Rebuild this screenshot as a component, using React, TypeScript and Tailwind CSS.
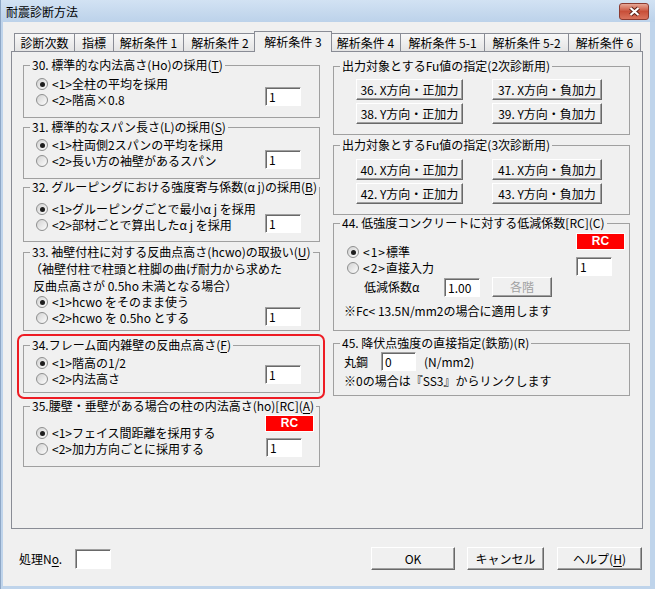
import React from "react";

type Kids = { children?: React.ReactNode };

const tabs = [
  { label: "診断次数", w: "w-[60px]" },
  { label: "指標", w: "w-[39px]" },
  { label: "解析条件 1", w: "w-[70px]" },
  { label: "解析条件 2", w: "w-[73px]" },
  { label: "解析条件 3", w: "w-[78px]", active: true },
  { label: "解析条件 4", w: "w-[70px]" },
  { label: "解析条件 5-1", w: "w-[84px]" },
  { label: "解析条件 5-2", w: "w-[84px]" },
  { label: "解析条件 6", w: "w-[73px]", last: true },
];

const U = ({ children }: Kids) => <span className="underline underline-offset-2">{children}</span>;

function Group({ title, className = "", children }: { title: React.ReactNode; className?: string } & Kids) {
  return (
    <fieldset className={`border border-[#a0a0a0] min-w-0 ${className}`}>
      <legend className="ml-[6px] px-[2px] h-[14px] leading-[14px] whitespace-nowrap">{title}</legend>
      {children}
    </fieldset>
  );
}

function Radio({ on, children }: { on?: boolean } & Kids) {
  return (
    <div className="flex items-center h-[16px] whitespace-nowrap">
      <span className="flex items-center justify-center w-[12px] h-[12px] shrink-0 rounded-full border border-[#8e8f8f] bg-linear-to-br from-[#d2d2d2] to-[#fdfdfd]">
        {on && <span className="w-[5px] h-[5px] rounded-full bg-[#1e1e1e]" />}
      </span>
      <span className="ml-[4px] leading-[16px]">{children}</span>
    </div>
  );
}

function Field({ v, className = "" }: { v?: string; className?: string }) {
  return (
    <div
      className={`h-[19px] shrink-0 bg-white border border-t-[#a0a0a0] border-l-[#a0a0a0] border-r-white border-b-white shadow-[inset_1px_1px_0_#696969] pl-[3px] leading-[17px] ${className}`}
    >
      {v}
    </div>
  );
}

function Btn({ className = "", disabled, children }: { className?: string; disabled?: boolean } & Kids) {
  return (
    <button
      type="button"
      className={`flex items-center justify-center shrink-0 bg-[#f0f0f0] border border-t-white border-l-white border-r-[#696969] border-b-[#696969] shadow-[inset_-1px_-1px_0_#a0a0a0] leading-[14px] whitespace-nowrap ${
        disabled ? "text-[#a0a0a0]" : "text-black"
      } ${className}`}
    >
      {children}
    </button>
  );
}

const Badge = ({ className = "" }: { className?: string }) => (
  <div
    className={`w-[47px] h-[15px] bg-[#ff0000] text-white font-bold text-[12px] leading-[15px] text-center font-['Liberation_Sans',sans-serif] shadow-[0_0_0_1px_#ffffff] ${className}`}
  >
    RC
  </div>
);

export default function App() {
  return (
    <div className="w-[655px] h-[589px] flex flex-col bg-[#bfd4eb] border-l border-[#8ea7c6] text-black text-[12px] font-['Noto_Sans_CJK_JP','Noto_Sans',sans-serif]">
      {/* title bar */}
      <div className="h-[22px] shrink-0 flex items-center pl-[5px] pr-[6px] bg-linear-to-b from-[#d2e2f3] to-[#bcd2ea]">
        <span className="leading-[14px] mt-[1px]">耐震診断方法</span>
        <div className="ml-auto w-[30px] h-[17px] mt-[1px] rounded-[3px] border border-[#8c3b31] bg-linear-to-b from-[#e6a797] via-[#c84f39] to-[#d9735d] flex items-center justify-center">
          <svg width="13" height="11" viewBox="0 0 13 11">
            <path d="M2.5 2 L10.5 9 M10.5 2 L2.5 9" stroke="#5b1f17" strokeWidth="4.2" />
            <path d="M2.5 2 L10.5 9 M10.5 2 L2.5 9" stroke="#ffffff" strokeWidth="2.2" />
          </svg>
        </div>
      </div>

      {/* client */}
      <div className="flex-1 ml-[2px] mr-[5px] mb-[3px] bg-[#f0f0f0] flex flex-col">
        {/* tab strip */}
        <div className="flex items-end h-[21px] mt-[9px] ml-[11px]">
          {tabs.map((t) =>
            t.active ? (
              <div
                key={t.label}
                className={`${t.w} -mx-[2px] h-[21px] relative z-10 bg-[#f0f0f0] border border-b-0 border-[#898c95] flex items-center justify-center pb-[1px] whitespace-nowrap`}
              >
                {t.label}
              </div>
            ) : (
              <div
                key={t.label}
                className={`${t.w} h-[18px] mb-[1px] bg-linear-to-b from-[#f8f8f8] to-[#e4e4e4] border-t border-l ${
                  t.last ? "border-r" : ""
                } border-[#898c95] flex items-center justify-center whitespace-nowrap`}
              >
                {t.label}
              </div>
            )
          )}
        </div>

        {/* tab panel */}
        <div className="-mt-[1px] ml-[8px] w-[632px] h-[478px] border border-[#898c95] flex pl-[11px] pr-[12px]">
          {/* left column */}
          <div className="w-[297px] flex flex-col pt-[6px]">
            <Group className="h-[60px]" title={<>30. 標準的な内法高さ(Ho)の採用(<U>T</U>)</>}>
              <div className="flex">
                <div className="pl-[12px] pt-[4px]">
                  <Radio on>&lt;1&gt;全柱の平均を採用</Radio>
                  <Radio>&lt;2&gt;階高×0.8</Radio>
                </div>
                <Field v="1" className="ml-auto mr-[18px] mt-[15px] w-[36px]" />
              </div>
            </Group>

            <Group className="h-[59px] mt-[2px]" title={<>31. 標準的なスパン長さ(L)の採用(<U>S</U>)</>}>
              <div className="flex">
                <div className="pl-[12px] pt-[3px]">
                  <Radio on>&lt;1&gt;柱両側2スパンの平均を採用</Radio>
                  <Radio>&lt;2&gt;長い方の袖壁があるスパン</Radio>
                </div>
                <Field v="1" className="ml-auto mr-[18px] mt-[16px] w-[36px]" />
              </div>
            </Group>

            <Group className="h-[62px] mt-[1px]" title={<>32. グルーピングにおける強度寄与係数(α j)の採用(<U>B</U>)</>}>
              <div className="flex">
                <div className="pl-[12px] pt-[7px]">
                  <Radio on>&lt;1&gt;グルーピングごとで最小α j を採用</Radio>
                  <Radio>&lt;2&gt;部材ごとで算出したα j を採用</Radio>
                </div>
                <Field v="1" className="ml-auto mr-[18px] mt-[20px] w-[36px]" />
              </div>
            </Group>

            <Group className="h-[86px] mt-[3px]" title={<>33. 袖壁付柱に対する反曲点高さ(hcwo)の取扱い(<U>U</U>)</>}>
              <div className="pl-[6px] pt-[1px] leading-[17px]">
                <div className="h-[17px]">（袖壁付柱で柱頭と柱脚の曲げ耐力から求めた</div>
                <div className="h-[17px] pl-[3px]">反曲点高さが 0.5ho 未満となる場合）</div>
              </div>
              <div className="flex">
                <div className="pl-[12px]">
                  <Radio on>&lt;1&gt;hcwo をそのまま使う</Radio>
                  <Radio>&lt;2&gt;hcwo を 0.5ho とする</Radio>
                </div>
                <Field v="1" className="ml-auto mr-[18px] mt-[13px] w-[36px]" />
              </div>
            </Group>

            {/* highlighted group */}
            <div className="mt-[3px] -ml-[6px] -mr-[5px] pl-[4px] pr-[3px] pt-[2px] pb-[4px] border-2 border-[#ee1c24] rounded-[7px]">
              <Group className="h-[55px]" title={<>34.フレーム面内雑壁の反曲点高さ(<U>F</U>)</>}>
                <div className="flex">
                  <div className="pl-[12px] pt-[3px]">
                    <Radio on>&lt;1&gt;階高の1/2</Radio>
                    <Radio>&lt;2&gt;内法高さ</Radio>
                  </div>
                  <Field v="1" className="ml-auto mr-[18px] mt-[13px] w-[36px]" />
                </div>
              </Group>
            </div>

            <Group className="h-[68px]" title={<>35.腰壁・垂壁がある場合の柱の内法高さ(ho)[RC](<U>A</U>)</>}>
              <div className="flex">
                <div className="pl-[12px] pt-[12px]">
                  <Radio on>&lt;1&gt;フェイス間距離を採用する</Radio>
                  <Radio>&lt;2&gt;加力方向ごとに採用する</Radio>
                </div>
                <div className="ml-auto mr-[6px] w-[47px] pt-[3px] flex flex-col">
                  <Badge />
                  <Field v="1" className="mt-[7px] w-[36px]" />
                </div>
              </div>
            </Group>
          </div>

          {/* right column */}
          <div className="w-[297px] ml-[13px] flex flex-col pt-[7px]">
            <Group className="h-[76px]" title="出力対象とするFu値の指定(2次診断用)">
              <div className="pl-[22px] pt-[6px] flex flex-col gap-[3px]">
                <div className="flex gap-[29px]">
                  <Btn className="w-[107px] h-[21px]">36. X方向・正加力</Btn>
                  <Btn className="w-[110px] h-[21px]">37. X方向・負加力</Btn>
                </div>
                <div className="flex gap-[29px]">
                  <Btn className="w-[107px] h-[21px]">38. Y方向・正加力</Btn>
                  <Btn className="w-[110px] h-[21px]">39. Y方向・負加力</Btn>
                </div>
              </div>
            </Group>

            <Group className="h-[77px] mt-[3px]" title="出力対象とするFu値の指定(3次診断用)">
              <div className="pl-[22px] pt-[7px] flex flex-col gap-[3px]">
                <div className="flex gap-[29px]">
                  <Btn className="w-[107px] h-[21px]">40. X方向・正加力</Btn>
                  <Btn className="w-[110px] h-[21px]">41. X方向・負加力</Btn>
                </div>
                <div className="flex gap-[29px]">
                  <Btn className="w-[107px] h-[21px]">42. Y方向・正加力</Btn>
                  <Btn className="w-[110px] h-[21px]">43. Y方向・負加力</Btn>
                </div>
              </div>
            </Group>

            <Group className="h-[115px] mt-[1px]" title="44. 低強度コンクリートに対する低減係数[RC](C)">
              <div className="flex">
                <div className="flex-1 pl-[10px]">
                  <div className="pl-[3px] pt-[14px]">
                    <Radio on>
                      <span className="tracking-[1px]">&lt;1&gt;</span>標準
                    </Radio>
                    <Radio>
                      <span className="tracking-[1px]">&lt;2&gt;</span>直接入力
                    </Radio>
                  </div>
                  <div className="flex items-center h-[20px] mt-[1px] pl-[20px]">
                    <span className="w-[80px]">低減係数α</span>
                    <Field v="1.00" className="w-[36px]" />
                    <Btn disabled className="ml-[12px] w-[60px] h-[20px]">
                      各階
                    </Btn>
                  </div>
                  <div className="mt-[7px] leading-[14px] whitespace-nowrap">※Fc&lt; 13.5N/mm2の場合に適用します</div>
                </div>
                <div className="w-[48px] mr-[5px] pt-[4px] flex flex-col items-end">
                  <Badge />
                  <Field v="1" className="mt-[8px] w-[36px] self-start" />
                </div>
              </div>
            </Group>

            <Group className="h-[60px] mt-[5px]" title="45. 降伏点強度の直接指定(鉄筋)(R)">
              <div className="pl-[10px]">
                <div className="flex items-center mt-[2px]">
                  <span className="w-[37px]">丸鋼</span>
                  <Field v="0" className="w-[35px]" />
                  <span className="ml-[8px]">(N/mm2)</span>
                </div>
                <div className="mt-[3px] leading-[14px] whitespace-nowrap">※0の場合は『SS3』からリンクします</div>
              </div>
            </Group>
          </div>
        </div>

        {/* bottom bar */}
        <div className="flex items-center h-[23px] mt-[18px] pl-[16px] pr-[8px]">
          <span className="w-[56px]">
            処理N<U>o</U>.
          </span>
          <Field className="w-[36px] h-[20px]" />
          <Btn className="ml-auto w-[84px] h-[23px]">OK</Btn>
          <Btn className="ml-[12px] w-[77px] h-[23px]">キャンセル</Btn>
          <Btn className="ml-[13px] w-[85px] h-[23px]">
            ヘルプ(<U>H</U>)
          </Btn>
        </div>
      </div>
    </div>
  );
}
